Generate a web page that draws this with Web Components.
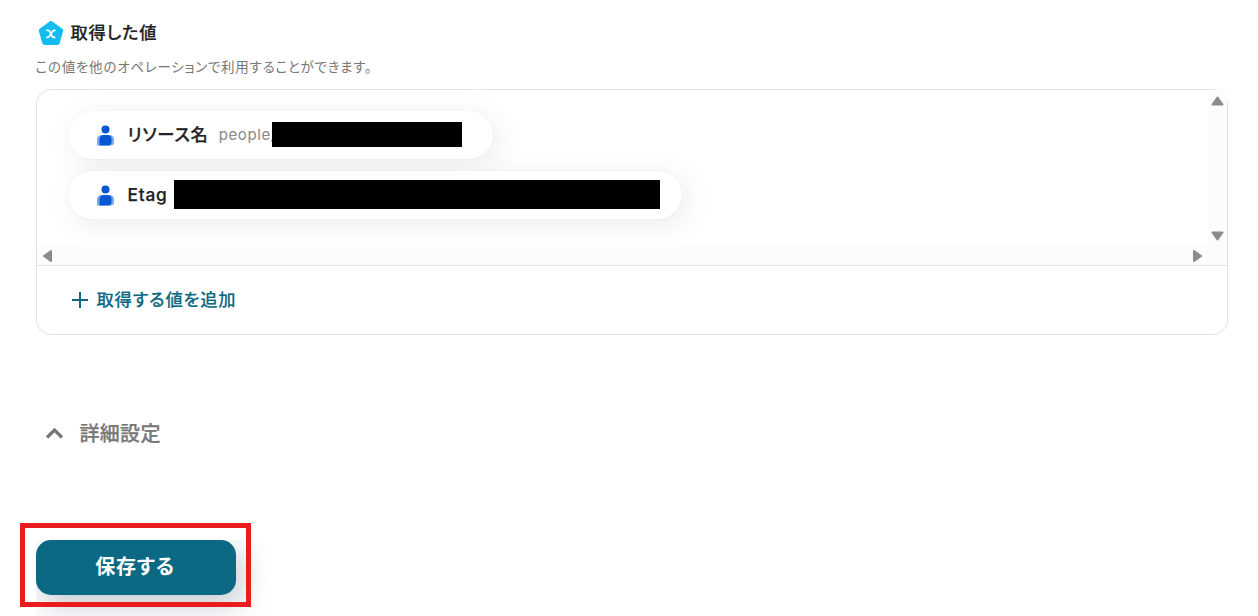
<!DOCTYPE html>
<html lang="ja">
<head>
<meta charset="utf-8">
<title>取得した値</title>
<style>
  body {
    margin: 0;
    background: #fff;
    color: #222;
    font-family: Inter, "Noto Sans CJK JP", sans-serif;
    font-feature-settings: "palt";
    overflow: hidden;
  }
</style>
</head>
<body>
<operation-page>
  <section-heading slot="heading" title="取得した値" subtitle="この値を他のオペレーションで利用することができます。"></section-heading>
  <value-panel slot="panel" action="取得する値を追加">
    <value-chip label="リソース名" value="people/" style="--chip-width: 425px; --mask-left: 204px; --mask-width: 190px; --mask-height: 25px"></value-chip>
    <value-chip label="Etag" style="--chip-width: 614px; --mask-left: 106px; --mask-width: 485.5px; --mask-height: 28.5px"></value-chip>
  </value-panel>
  <detail-toggle slot="detail">詳細設定</detail-toggle>
  <save-button slot="save">保存する</save-button>
</operation-page>

<script>
class OperationPage extends HTMLElement {
  constructor() {
    super();
    this.attachShadow({ mode: 'open' });
    this.shadowRoot.innerHTML = `
      <style>
        :host {
          display: flex;
          flex-direction: column;
          box-sizing: border-box;
          height: 616px;
          padding: 20px 30px 0 36px;
        }
        .panel { margin-top: 12px; }
        .detail { margin-top: 83px; }
        .save { margin-top: 90px; }
      </style>
      <slot name="heading"></slot>
      <div class="panel"><slot name="panel"></slot></div>
      <div class="detail"><slot name="detail"></slot></div>
      <div class="save"><slot name="save"></slot></div>
    `;
  }
}

class SectionHeading extends HTMLElement {
  constructor() {
    super();
    this.attachShadow({ mode: 'open' });
    this.shadowRoot.innerHTML = `
      <style>
        :host { display: block; }
        .row {
          display: flex;
          align-items: center;
          height: 26px;
          padding-left: 2px;
        }
        svg { flex: none; width: 26px; height: 26px; }
        h2 {
          margin: 0 0 0 6.5px;
          font-size: 17.3px;
          font-weight: 500;
          line-height: 26px;
          letter-spacing: 0.75px;
          -webkit-text-stroke: 0.2px currentColor;
          white-space: nowrap;
        }
        p {
          margin: 11px 0 0 -0.5px;
          font-size: 13.5px;
          line-height: 20px;
          letter-spacing: 0.74px;
          color: #777;
          white-space: nowrap;
        }
      </style>
      <div class="row">
        <svg viewBox="0 0 26 26">
          <path d="M13 3.300 23 10.500 19.500 22.700H6.500L3 10.500Z" fill="#13bcee" stroke="#13bcee" stroke-width="4.500" stroke-linejoin="round"/>
          <path d="M9 10.300H10Q11 10.300 11.500 11.200L14.300 16.500Q14.800 17.300 15.800 17.300H16.800M17 10.300H16.300Q15.200 10.300 14.600 11.200L11.300 16.400Q10.700 17.300 9.600 17.300H8.800" fill="none" stroke="#fff" stroke-width="1.700" stroke-linecap="round"/>
        </svg>
        <h2>${this.getAttribute('title') || ''}</h2>
      </div>
      <p>${this.getAttribute('subtitle') || ''}</p>
    `;
  }
}

class ValueChip extends HTMLElement {
  constructor() {
    super();
    this.attachShadow({ mode: 'open' });
    const value = this.getAttribute('value');
    this.shadowRoot.innerHTML = `
      <style>
        :host {
          display: flex;
          align-items: center;
          position: relative;
          box-sizing: border-box;
          width: var(--chip-width);
          height: 48px;
          padding-left: 29px;
          border-radius: 24px;
          background: #fff;
          box-shadow: 5px 6px 30px rgba(0, 0, 0, 0.08), 0 0 2px rgba(0, 0, 0, 0.06);
          white-space: nowrap;
        }
        svg { flex: none; width: 17px; height: 21px; margin: 1px 13.5px 0 0; }
        .label { font-size: 17.3px; line-height: 26px; font-weight: 500; letter-spacing: 0.75px; -webkit-text-stroke: 0.25px currentColor; }
        .label.jp { margin-top: -1px; }
        .value { margin: -1px 0 0 10px; font-size: 15px; letter-spacing: 0.6px; color: #888; }
        /* redaction bar lying over the value */
        .mask {
          position: absolute;
          left: var(--mask-left);
          top: calc((47px - var(--mask-height)) / 2);
          width: var(--mask-width);
          height: var(--mask-height);
          background: #000;
        }
      </style>
      <svg viewBox="0 0 17 21">
        <path d="M0 20.500V15Q0 10 5 10H12Q17 10 17 15V17Q17 20.500 13.500 20.500Z" fill="#7ba4fa"/>
        <path d="M2.500 20.500V15Q2.500 10 7 10H10Q14.500 10 14.500 14V17Q14.500 20.500 11 20.500Z" fill="#0558d2"/>
        <circle cx="8.500" cy="4.500" r="4" fill="#0558d2"/>
      </svg>
      <span class="label ${value ? 'jp' : ''}">${this.getAttribute('label') || ''}</span>
      ${value ? `<span class="value">${value}</span>` : ''}
      <span class="mask"></span>
    `;
  }
}

class ValuePanel extends HTMLElement {
  constructor() {
    super();
    this.attachShadow({ mode: 'open' });
    this.shadowRoot.innerHTML = `
      <style>
        :host {
          display: block;
          box-sizing: border-box;
          height: 246px;
          border: 1px solid #e4e4e4;
          border-radius: 15px;
        }
        .scroll {
          display: grid;
          grid-template: 156px 19px / 1fr 19px;
          border-bottom: 1px solid #e2e2e2;
        }
        .list {
          display: flex;
          flex-direction: column;
          gap: 12px;
          padding: 21px 0 0 31px;
          overflow: hidden;
          border-top-left-radius: 14px;
        }
        .bar { display: flex; justify-content: space-between; align-items: center; background: #fcfcfc; }
        .bar.v { flex-direction: column; padding: 5px 0 4px; border-top-right-radius: 6px; }
        .bar.h { padding: 0 5px; }
        .corner { background: #fcfcfc; }
        svg { display: block; fill: #8b8b8b; stroke: #8b8b8b; stroke-width: 2; stroke-linejoin: round; }
        .action {
          display: flex;
          align-items: center;
          height: 68px;
          padding-left: 35px;
          color: #0b6983;
          font-size: 17.3px;
          font-weight: 500;
          line-height: 26px;
          letter-spacing: 0.8px;
          white-space: nowrap;
        }
        .action svg { margin-right: 8.5px; fill: none; stroke: currentColor; }
        .action span { margin-top: -1px; -webkit-text-stroke: 0.15px currentColor; }
      </style>
      <div class="scroll">
        <div class="list"><slot></slot></div>
        <div class="bar v">
          <svg width="13" height="12" viewBox="0 0 13 12"><path d="M6.500 2.500 11.500 9.500H1.500Z"/></svg>
          <svg width="13" height="12" viewBox="0 0 13 12"><path d="M1.500 2.500H11.500L6.500 9.500Z"/></svg>
        </div>
        <div class="bar h">
          <svg width="11" height="14" viewBox="0 0 11 14"><path d="M2 7 9 2V12Z"/></svg>
          <svg width="11" height="14" viewBox="0 0 11 14"><path d="M9 7 2 2V12Z"/></svg>
        </div>
        <div class="corner"></div>
      </div>
      <div class="action">
        <svg width="16" height="16" viewBox="0 0 16 16"><path d="M8 0V16M0 8H16"/></svg>
        <span>${this.getAttribute('action') || ''}</span>
      </div>
    `;
  }
}

class DetailToggle extends HTMLElement {
  constructor() {
    super();
    this.attachShadow({ mode: 'open' });
    this.shadowRoot.innerHTML = `
      <style>
        :host {
          display: flex;
          align-items: center;
          height: 32px;
          padding-left: 9px;
          color: #777;
          font-size: 20px;
          font-weight: 500;
          line-height: 30px;
          letter-spacing: 0.3px;
          white-space: nowrap;
        }
        svg { margin: -2px 15.5px 0 0; }
        span { margin-top: -1px; -webkit-text-stroke: 0.25px currentColor; }
      </style>
      <svg width="19" height="14" viewBox="0 0 19 14"><path d="M2 11.500 9.500 4 17 11.500" fill="none" stroke="#777" stroke-width="3.300"/></svg>
      <span><slot></slot></span>
    `;
  }
}

class SaveButton extends HTMLElement {
  constructor() {
    super();
    this.attachShadow({ mode: 'open' });
    this.shadowRoot.innerHTML = `
      <style>
        :host { display: block; position: relative; width: 200px; height: 55px; }
        .clip { clip-path: inset(0 -50px -50px 0); }
        button {
          display: block;
          width: 200px;
          height: 55px;
          padding: 0 2px 4px 0;
          border: 0;
          border-radius: 15px;
          background: #0b6983;
          box-shadow: 6px 10px 30px rgba(30, 55, 80, 0.27);
          color: #fff;
          font: bold 20px Inter, "Noto Sans CJK JP", sans-serif;
          font-feature-settings: "palt";
          letter-spacing: 0.8px;
        }
        /* highlight frame lying over the button */
        .frame {
          position: absolute;
          inset: -17px -15px -12px -16px;
          border: 5px solid #ea1c1e;
          pointer-events: none;
        }
      </style>
      <div class="clip"><button><slot></slot></button></div>
      <div class="frame"></div>
    `;
  }
}

customElements.define('operation-page', OperationPage);
customElements.define('section-heading', SectionHeading);
customElements.define('value-chip', ValueChip);
customElements.define('value-panel', ValuePanel);
customElements.define('detail-toggle', DetailToggle);
customElements.define('save-button', SaveButton);
</script>
</body>
</html>
